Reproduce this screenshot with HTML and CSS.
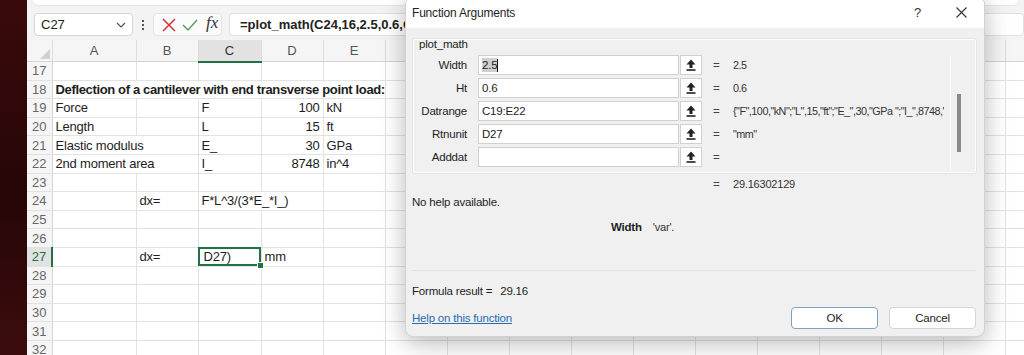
FILE: index.html
```html
<!DOCTYPE html>
<html lang="en">
<head>
  <meta charset="UTF-8" />
  <title>plot_math - Function Arguments</title>
  <link rel="stylesheet" href="styles.css">
</head>
<body>

<div class="excel">
  <div class="ribbon-edge"></div>

  <div class="formula-bar">
    <div class="name-box">
      <span>C27</span>
      <svg width="10" height="6" viewBox="0 0 10 6"><path d="M1 1 L5 5 L9 1" fill="none" stroke="#555" stroke-width="1.2"/></svg>
    </div>
    <div class="bar-dots"><i></i><i></i><i></i></div>
    <div class="bar-actions">
      <svg width="14" height="14" viewBox="0 0 14 14"><path d="M1 1 L13 13 M13 1 L1 13" stroke="#d13438" stroke-width="1.5"/></svg>
      <svg width="16" height="14" viewBox="0 0 16 14"><path d="M1 7 L6 12 L15 2" fill="none" stroke="#5b9d6c" stroke-width="1.5"/></svg>
      <span class="fx">fx</span>
    </div>
    <div class="formula-input">=plot_math(C24,16,2.5,0.6,C19:E22,D27)</div>
  </div>

  <div class="sheet-wrap">
    <table class="sheet">
      <colgroup>
        <col class="w-rh"><col class="w-a"><col class="w62"><col class="w63"><col class="w62"><col class="w62"><col class="w62">
        <col span="9" class="w62"><col class="w62">
      </colgroup>
      <thead>
        <tr><th class="corner"><span></span></th><th>A</th><th>B</th><th class="sel">C</th><th>D</th><th>E</th><th></th><th></th><th></th><th></th><th></th><th></th><th></th><th></th><th></th><th></th><th></th></tr>
      </thead>
      <tbody>
        <tr><th>17</th><td></td><td></td><td></td><td></td><td></td><td></td><td></td><td></td><td></td><td></td><td></td><td></td><td></td><td></td><td></td><td></td></tr>
        <tr><th>18</th><td colspan="5" class="bold">Deflection of a cantilever with end transverse point load:</td><td></td><td></td><td></td><td></td><td></td><td></td><td></td><td></td><td></td><td></td><td></td></tr>
        <tr><th>19</th><td>Force</td><td></td><td>F</td><td class="num">100</td><td>kN</td><td></td><td></td><td></td><td></td><td></td><td></td><td></td><td></td><td></td><td></td><td></td></tr>
        <tr><th>20</th><td>Length</td><td></td><td>L</td><td class="num">15</td><td>ft</td><td></td><td></td><td></td><td></td><td></td><td></td><td></td><td></td><td></td><td></td><td></td></tr>
        <tr><th>21</th><td colspan="2">Elastic modulus</td><td>E_</td><td class="num">30</td><td>GPa</td><td></td><td></td><td></td><td></td><td></td><td></td><td></td><td></td><td></td><td></td><td></td></tr>
        <tr><th>22</th><td colspan="2">2nd moment area</td><td>I_</td><td class="num">8748</td><td>in^4</td><td></td><td></td><td></td><td></td><td></td><td></td><td></td><td></td><td></td><td></td><td></td></tr>
        <tr><th>23</th><td></td><td></td><td></td><td></td><td></td><td></td><td></td><td></td><td></td><td></td><td></td><td></td><td></td><td></td><td></td><td></td></tr>
        <tr><th>24</th><td></td><td>dx=</td><td colspan="2">F*L^3/(3*E_*I_)</td><td></td><td></td><td></td><td></td><td></td><td></td><td></td><td></td><td></td><td></td><td></td><td></td></tr>
        <tr><th>25</th><td></td><td></td><td></td><td></td><td></td><td></td><td></td><td></td><td></td><td></td><td></td><td></td><td></td><td></td><td></td><td></td></tr>
        <tr><th>26</th><td></td><td></td><td></td><td></td><td></td><td></td><td></td><td></td><td></td><td></td><td></td><td></td><td></td><td></td><td></td><td></td></tr>
        <tr><th class="sel">27</th><td></td><td>dx=</td><td class="active">D27)</td><td>mm</td><td></td><td></td><td></td><td></td><td></td><td></td><td></td><td></td><td></td><td></td><td></td><td></td></tr>
        <tr><th>28</th><td></td><td></td><td></td><td></td><td></td><td></td><td></td><td></td><td></td><td></td><td></td><td></td><td></td><td></td><td></td><td></td></tr>
        <tr><th>29</th><td></td><td></td><td></td><td></td><td></td><td></td><td></td><td></td><td></td><td></td><td></td><td></td><td></td><td></td><td></td><td></td></tr>
        <tr><th>30</th><td></td><td></td><td></td><td></td><td></td><td></td><td></td><td></td><td></td><td></td><td></td><td></td><td></td><td></td><td></td><td></td></tr>
        <tr><th>31</th><td></td><td></td><td></td><td></td><td></td><td></td><td></td><td></td><td></td><td></td><td></td><td></td><td></td><td></td><td></td><td></td></tr>
        <tr><th>32</th><td></td><td></td><td></td><td></td><td></td><td></td><td></td><td></td><td></td><td></td><td></td><td></td><td></td><td></td><td></td><td></td></tr>
      </tbody>
    </table>
  </div>
</div>

<div class="dialog">
  <div class="dialog-title">
    <span class="title-text">Function Arguments</span>
    <span class="title-help">?</span>
    <svg class="title-close" width="11" height="11" viewBox="0 0 11 11"><path d="M0.5 0.5 L10.5 10.5 M10.5 0.5 L0.5 10.5" stroke="#333" stroke-width="1.1"/></svg>
  </div>

  <div class="dialog-body">
    <div class="group">
      <div class="group-label">plot_math</div>
      <div class="arg-pane">
        <div class="arg-list">
          <div class="arg-row">
            <label>Width</label>
            <div class="arg-input"><span class="selected">2.5</span><span class="caret"></span></div>
            <div class="arg-btn"><svg width="10" height="12" viewBox="0 0 10 12"><path d="M5 0.5 L9.5 5.5 H6.5 V9 H3.5 V5.5 H0.5 Z" fill="#222"/><rect x="0.5" y="10.2" width="9" height="1.6" fill="#222"/></svg></div>
            <span class="eq">=</span>
            <span class="arg-value">2.5</span>
          </div>
          <div class="arg-row">
            <label>Ht</label>
            <div class="arg-input">0.6</div>
            <div class="arg-btn"><svg width="10" height="12" viewBox="0 0 10 12"><path d="M5 0.5 L9.5 5.5 H6.5 V9 H3.5 V5.5 H0.5 Z" fill="#222"/><rect x="0.5" y="10.2" width="9" height="1.6" fill="#222"/></svg></div>
            <span class="eq">=</span>
            <span class="arg-value">0.6</span>
          </div>
          <div class="arg-row">
            <label>Datrange</label>
            <div class="arg-input">C19:E22</div>
            <div class="arg-btn"><svg width="10" height="12" viewBox="0 0 10 12"><path d="M5 0.5 L9.5 5.5 H6.5 V9 H3.5 V5.5 H0.5 Z" fill="#222"/><rect x="0.5" y="10.2" width="9" height="1.6" fill="#222"/></svg></div>
            <span class="eq">=</span>
            <span class="arg-value">{"F",100,"kN";"L",15,"ft";"E_",30,"GPa ";"I_",8748,"in^4"}</span>
          </div>
          <div class="arg-row">
            <label>Rtnunit</label>
            <div class="arg-input">D27</div>
            <div class="arg-btn"><svg width="10" height="12" viewBox="0 0 10 12"><path d="M5 0.5 L9.5 5.5 H6.5 V9 H3.5 V5.5 H0.5 Z" fill="#222"/><rect x="0.5" y="10.2" width="9" height="1.6" fill="#222"/></svg></div>
            <span class="eq">=</span>
            <span class="arg-value">"mm"</span>
          </div>
          <div class="arg-row">
            <label>Adddat</label>
            <div class="arg-input"></div>
            <div class="arg-btn"><svg width="10" height="12" viewBox="0 0 10 12"><path d="M5 0.5 L9.5 5.5 H6.5 V9 H3.5 V5.5 H0.5 Z" fill="#222"/><rect x="0.5" y="10.2" width="9" height="1.6" fill="#222"/></svg></div>
            <span class="eq">=</span>
            <span class="arg-value"></span>
          </div>
        </div>
        <div class="scrollbar"><div class="thumb"></div></div>
      </div>
    </div>

    <div class="result-line"><span class="eq">=</span><span>29.16302129</span></div>
    <div class="help-text">No help available.</div>
    <div class="arg-help"><b>Width</b><span>'var'.</span></div>

    <div class="separator"></div>

    <div class="formula-result"><span>Formula result =</span><span>29.16</span></div>

    <div class="dialog-footer">
      <a class="help-link">Help on this function</a>
      <button class="btn btn-ok">OK</button>
      <button class="btn">Cancel</button>
    </div>
  </div>
</div>

</body>
</html>
```

FILE: styles.css
```css
body {
  margin: 0;
  width: 1024px;
  height: 355px;
  overflow: hidden;
  position: relative;
  display: flex;
  font-family: "Liberation Sans", Arial, sans-serif;
  background: linear-gradient(180deg, #3a0a0b 0%, #260607 55%, #3c0c0d 100%);
}

/* excel window */
.excel {
  margin-left: 27px;
  flex: 1;
  display: flex;
  flex-direction: column;
  background: #f3f3f3;
  overflow: hidden;
}

.ribbon-edge {
  height: 5px;
  margin: 0 6px;
  background: #fff;
  border-radius: 0 0 6px 6px;
  box-shadow: 0 1px 1px rgba(0,0,0,0.06);
}

.formula-bar {
  display: flex;
  align-items: center;
  height: 23px;
  margin: 8px 0 4px 7px;
}

.name-box {
  width: 99px;
  height: 23px;
  box-sizing: border-box;
  display: flex;
  align-items: center;
  justify-content: space-between;
  padding: 0 6px 0 6px;
  background: #fff;
  border: 1px solid #d6d6d6;
  border-radius: 4px;
  font-size: 13px;
  color: #222;
}

.bar-dots {
  width: 20px;
  display: flex;
  flex-direction: column;
  align-items: center;
  gap: 2px;
}

.bar-dots i {
  width: 2px;
  height: 2px;
  background: #555;
}

.bar-actions {
  width: 69px;
  height: 23px;
  box-sizing: border-box;
  display: flex;
  align-items: center;
  gap: 6px;
  padding-left: 8px;
  background: #fbfbfb;
  border: 1px solid #e3e3e3;
  border-radius: 4px;
}

.fx {
  font-family: "Liberation Serif", serif;
  font-style: italic;
  font-size: 17px;
  color: #333;
  margin-left: 2px;
  margin-top: -3px;
}

.formula-input {
  flex: 1;
  height: 23px;
  box-sizing: border-box;
  margin-left: 7px;
  padding-left: 10px;
  line-height: 21px;
  background: #fff;
  border: 1px solid #e0e0e0;
  border-radius: 4px;
  font-size: 13px;
  font-weight: bold;
  color: #222;
  white-space: nowrap;
  overflow: hidden;
}

/* grid */
.sheet-wrap {
  flex: 1;
  background: #fff;
  overflow: hidden;
}

.sheet {
  table-layout: fixed;
  border-collapse: collapse;
  width: 1040px;
  font-size: 13px;
  color: #1d1d1d;
}

.w-rh { width: 25px; }
.w-a { width: 84px; }
.w62 { width: 62px; }
.w63 { width: 63px; }

.sheet thead th {
  height: 20.5px;
  padding: 0;
  background: #f5f5f5;
  border-right: 1px solid #dcdcdc;
  border-bottom: 1px solid #d4d4d4;
  font-weight: normal;
  color: #555;
}

.sheet thead th.sel {
  background: #e2e2e2;
  border-bottom: 2px solid #217346;
  color: #333;
}

.sheet th.corner {
  position: relative;
}

.sheet th.corner span {
  position: absolute;
  right: 2px;
  bottom: 2px;
  width: 0;
  height: 0;
  border-left: 10px solid transparent;
  border-bottom: 10px solid #d0d0d0;
}

.sheet tbody tr {
  height: 18.6px;
}

.sheet tbody th {
  padding: 0;
  background: #f5f5f5;
  border-right: 1px solid #d4d4d4;
  border-bottom: 1px solid #e2e2e2;
  font-weight: normal;
  color: #666;
  text-align: center;
}

.sheet tbody th.sel {
  background: #e2e2e2;
  border-right: 2px solid #217346;
  color: #217346;
}

.sheet td {
  padding: 0 3px;
  border-right: 1px solid #e2e2e2;
  border-bottom: 1px solid #e2e2e2;
  white-space: nowrap;
  letter-spacing: -0.2px;
  overflow: visible;
}

.sheet td.bold {
  font-weight: bold;
  letter-spacing: -0.35px;
}

.sheet td.num {
  text-align: right;
}

.sheet td.active {
  position: relative;
  outline: 2px solid #217346;
  outline-offset: -2px;
  padding-left: 5px;
}

.sheet td.active::after {
  content: "";
  position: absolute;
  right: -3px;
  bottom: -3px;
  width: 5px;
  height: 5px;
  background: #217346;
  border: 1px solid #fff;
}

/* function arguments dialog */
.dialog {
  position: absolute;
  left: 405px;
  top: -4px;
  width: 580px;
  height: 341px;
  box-sizing: border-box;
  background: #f0f0f0;
  border: 1px solid #d2d2d2;
  border-radius: 8px;
  box-shadow: 0 6px 24px rgba(0,0,0,0.28);
  overflow: hidden;
  font-size: 11.5px;
  letter-spacing: -0.2px;
  color: #1e1e1e;
}

.dialog-title {
  height: 27px;
  padding: 2px 0 2px 6px;
  display: flex;
  align-items: center;
  background: #fff;
  font-size: 12px;
}

.title-text {
  flex: 1;
}

.title-help {
  width: 20px;
  margin-right: 2px;
  font-size: 13px;
  color: #333;
}

.title-close {
  margin: 0 17px 0 20px;
}

.dialog-body {
  padding: 0 8px 0 6px;
}

.group {
  margin: 11px 0 0 1px;
  height: 134px;
  box-sizing: border-box;
  border: 1px solid #fcfcfc;
  border-radius: 2px;
  box-shadow: 0 0 0 1px #e4e4e4;
}

.group-label {
  margin: -3px 0 0 5px;
  line-height: 14px;
}

.arg-pane {
  display: flex;
  margin-top: 4px;
  height: 116px;
}

.arg-list {
  flex: 1;
  display: flex;
  flex-direction: column;
  gap: 3px;
  overflow: hidden;
}

.arg-row {
  display: flex;
  align-items: center;
  height: 20px;
}

.arg-row label {
  width: 53px;
  text-align: right;
  margin-right: 11px;
}

.arg-input {
  width: 201px;
  height: 20px;
  box-sizing: border-box;
  display: flex;
  align-items: center;
  padding-left: 3px;
  background: #fff;
  border: 1px solid #d0d0d0;
  white-space: nowrap;
}

.selected {
  background: #cfcfcf;
  padding: 1px 0;
}

.caret {
  width: 1px;
  height: 13px;
  background: #111;
}

.arg-btn {
  width: 22px;
  height: 20px;
  box-sizing: border-box;
  margin-left: 1px;
  display: flex;
  align-items: center;
  justify-content: center;
  background: #fff;
  border: 1px solid #d0d0d0;
}

.eq {
  width: 20px;
  margin-left: 11px;
  color: #444;
}

.arg-value {
  flex: 1;
  white-space: nowrap;
  overflow: hidden;
  font-size: 10.8px;
  letter-spacing: -0.5px;
  color: #333;
  margin-right: 6px;
}

.scrollbar {
  width: 24px;
  border-left: 1px solid #fbfbfb;
  margin-top: 1px;
}

.thumb {
  width: 4px;
  height: 58px;
  margin: 38px 0 0 6px;
  background: #8a8a8a;
}

.result-line {
  display: flex;
  margin-top: 4px;
  padding-left: 301px;
  line-height: 14px;
}

.result-line .eq {
  margin-left: 0;
}

.result-line span:last-child {
  font-size: 11px;
  color: #333;
}

.help-text {
  margin-top: 4px;
  line-height: 14px;
}

.arg-help {
  margin-top: 11px;
  padding-left: 199px;
  line-height: 14px;
}

.arg-help span {
  margin-left: 11px;
  font-size: 11px;
  color: #333;
}

.separator {
  margin-top: 36px;
  height: 1px;
  background: #e2e2e2;
}

.formula-result {
  margin-top: 13px;
  line-height: 14px;
}

.formula-result span:last-child {
  margin-left: 8px;
}

.dialog-footer {
  display: flex;
  align-items: center;
  margin-top: 9px;
}

.help-link {
  flex: 1;
  color: #2b6cb0;
  text-decoration: underline;
}

.btn {
  width: 87px;
  height: 22px;
  margin-left: 11px;
  background: #fff;
  border: 1px solid #d4d4d4;
  border-radius: 4px;
  font-family: "Liberation Sans", Arial, sans-serif;
  font-size: 11.5px;
  letter-spacing: -0.2px;
  color: #1e1e1e;
}

.btn-ok {
  border-color: #7ea2c2;
}
```
